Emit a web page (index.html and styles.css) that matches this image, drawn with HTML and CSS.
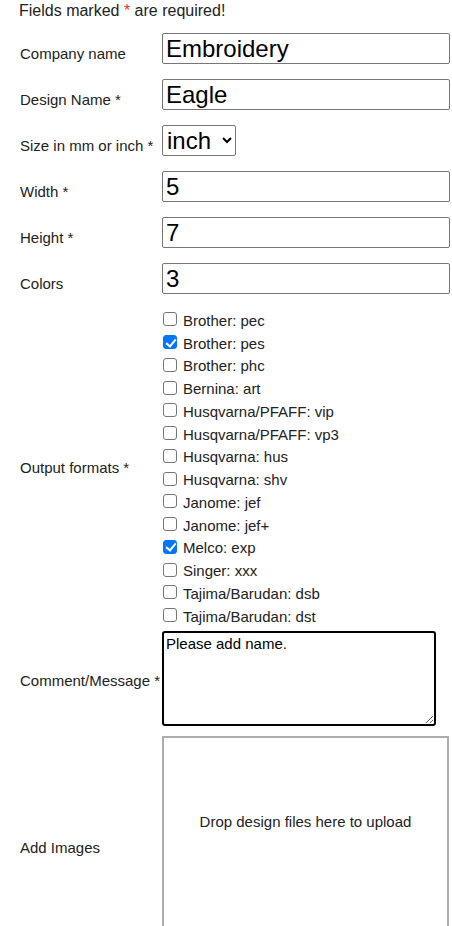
FILE: index.html
```html
<!DOCTYPE html>
<html>
<head>
<meta charset="utf-8">
<link rel="stylesheet" href="styles.css">
</head>
<body>
<p class="note">Fields marked <span class="req">*</span> are required!</p>
<form class="form">
  <label class="lbl">Company name</label>
  <div class="cell"><input class="txt" type="text" value="Embroidery"></div>

  <label class="lbl">Design Name *</label>
  <div class="cell"><input class="txt" type="text" value="Eagle"></div>

  <label class="lbl">Size in mm or inch *</label>
  <div class="cell"><select class="sel"><option>inch</option><option>mm</option></select></div>

  <label class="lbl">Width *</label>
  <div class="cell"><input class="txt" type="text" value="5"></div>

  <label class="lbl">Height *</label>
  <div class="cell"><input class="txt" type="text" value="7"></div>

  <label class="lbl">Colors</label>
  <div class="cell"><input class="txt" type="text" value="3"></div>

  <label class="lbl">Output formats *</label>
  <div class="opts">
    <label class="opt"><input class="cb" type="checkbox">Brother: pec</label>
    <label class="opt"><input class="cb" type="checkbox" checked>Brother: pes</label>
    <label class="opt"><input class="cb" type="checkbox">Brother: phc</label>
    <label class="opt"><input class="cb" type="checkbox">Bernina: art</label>
    <label class="opt"><input class="cb" type="checkbox">Husqvarna/PFAFF: vip</label>
    <label class="opt"><input class="cb" type="checkbox">Husqvarna/PFAFF: vp3</label>
    <label class="opt"><input class="cb" type="checkbox">Husqvarna: hus</label>
    <label class="opt"><input class="cb" type="checkbox">Husqvarna: shv</label>
    <label class="opt"><input class="cb" type="checkbox">Janome: jef</label>
    <label class="opt"><input class="cb" type="checkbox">Janome: jef+</label>
    <label class="opt"><input class="cb" type="checkbox" checked>Melco: exp</label>
    <label class="opt"><input class="cb" type="checkbox">Singer: xxx</label>
    <label class="opt"><input class="cb" type="checkbox">Tajima/Barudan: dsb</label>
    <label class="opt"><input class="cb" type="checkbox">Tajima/Barudan: dst</label>
  </div>

  <label class="lbl">Comment/Message *</label>
  <div class="cell"><textarea class="msg">Please add name.</textarea></div>

  <label class="lbl">Add Images</label>
  <div class="drop"><div class="drop-msg">Drop design files here to upload</div></div>
</form>
</body>
</html>
```

FILE: styles.css
```css
html, body {
  margin: 0;
  padding: 0;
  background: #fff;
}
body {
  font-family: "Liberation Sans", Arial, sans-serif;
  color: #222;
  font-size: 15px;
}
.note {
  margin: 2px 0 0 19px;
  font-size: 16px;
  line-height: 18px;
}
.req {
  color: #e8321e;
}
.form {
  display: grid;
  grid-template-columns: 142px 288px;
  row-gap: 5px;
  padding-left: 20px;
  margin-top: 13px;
  align-items: center;
}
.lbl {
  white-space: nowrap;
  font-size: 15px;
  line-height: 17px;
}
.cell {
  display: flex;
  align-items: flex-start;
}
.txt {
  box-sizing: border-box;
  width: 288px;
  height: 31px;
  margin: 0 0 10px 0;
  padding: 1px 3px;
  font-family: "Liberation Sans", Arial, sans-serif;
  font-size: 24px;
  color: #000;
  border: 1px solid #767676;
  border-radius: 2px;
}
.sel {
  box-sizing: border-box;
  height: 31px;
  width: 74px;
  margin: 0 0 10px 0;
  font-family: "Liberation Sans", Arial, sans-serif;
  font-size: 24px;
  color: #000;
  border: 1px solid #767676;
  border-radius: 2px;
  background: #fff;
}
.opts {
  display: flex;
  flex-direction: column;
  margin-bottom: -2px;
}
.opt {
  display: flex;
  align-items: center;
  height: 22.75px;
  font-size: 15px;
  white-space: nowrap;
}
.cb {
  -webkit-appearance: none;
  appearance: none;
  box-sizing: border-box;
  width: 14px;
  height: 14px;
  margin: -2px 6px 0 1px;
  border: 1px solid #767676;
  border-radius: 3px;
  background: #fff;
  position: relative;
  flex: none;
}
.cb:checked {
  background: #0075ff;
  border-color: #0075ff;
}
.cb:checked::after {
  content: "";
  position: absolute;
  left: 3.5px;
  top: 0.5px;
  width: 4px;
  height: 8px;
  border: solid #fff;
  border-width: 0 2px 2px 0;
  transform: rotate(40deg);
}
.msg {
  box-sizing: border-box;
  width: 274px;
  height: 95px;
  margin: 0 0 5px 0;
  padding: 2px 2px;
  font-family: "Liberation Sans", Arial, sans-serif;
  font-size: 15px;
  color: #000;
  border: 2px solid #000;
  border-radius: 3px;
  resize: both;
}
.drop {
  box-sizing: border-box;
  width: 287px;
  height: 224px;
  border: 2px solid #adadad;
  padding-top: 75px;
}
.drop-msg {
  text-align: center;
  font-size: 15px;
  line-height: 17px;
  color: #222;
}
```
